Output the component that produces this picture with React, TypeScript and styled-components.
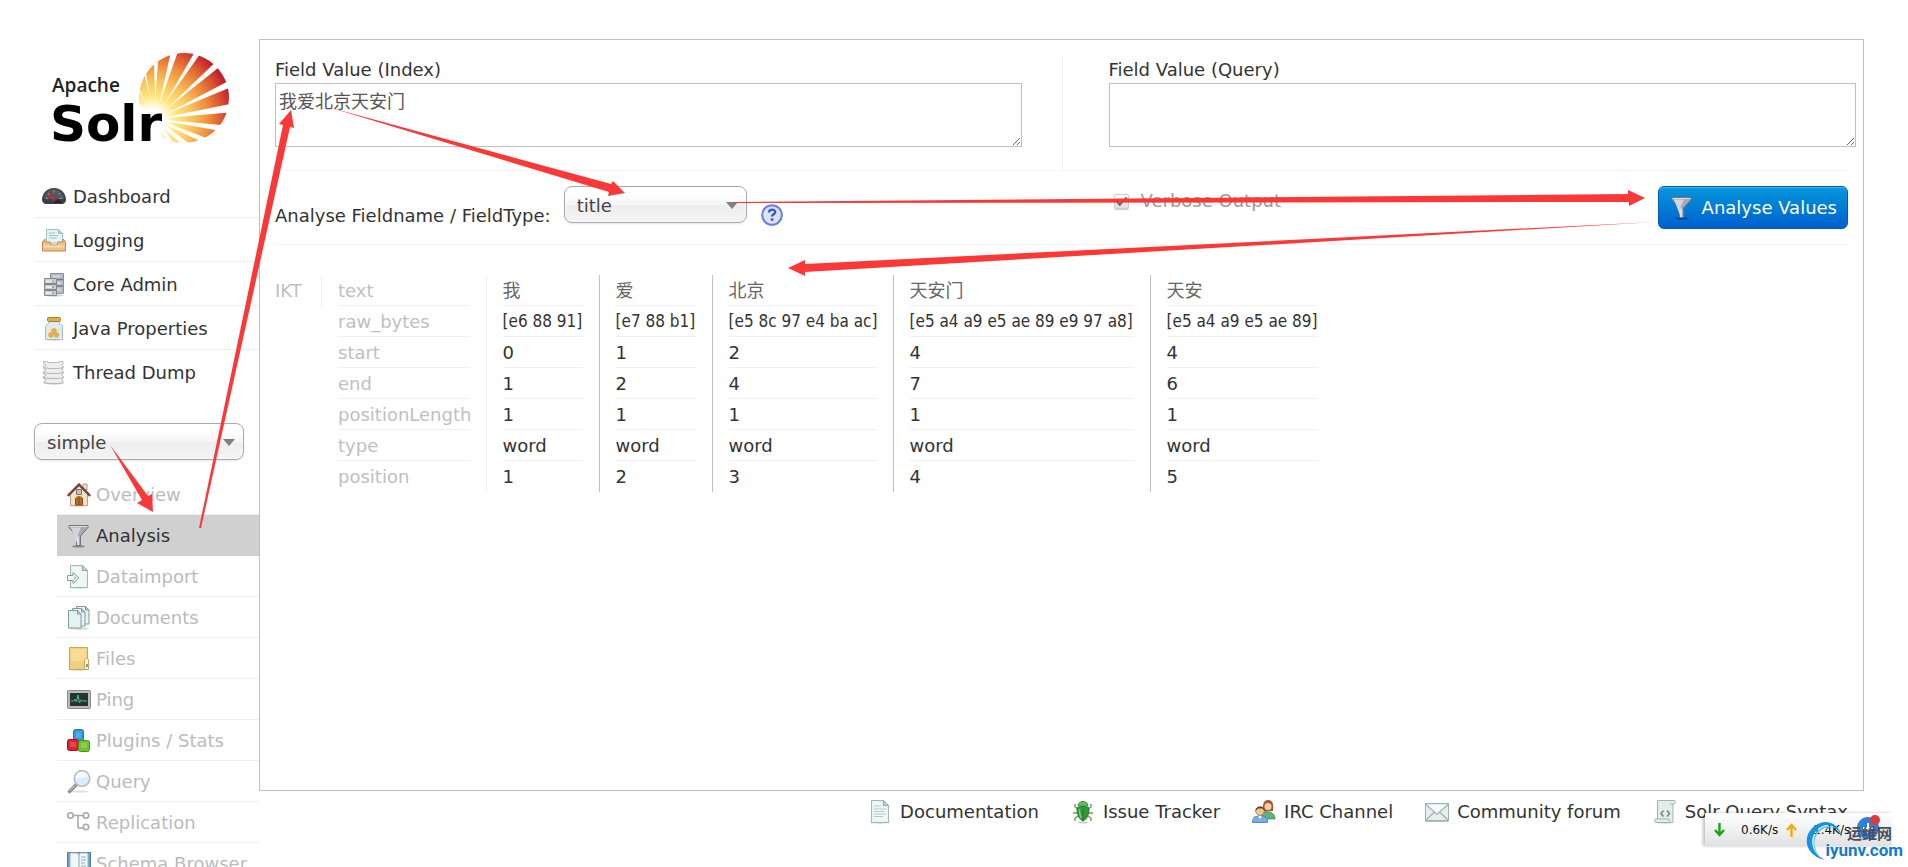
import React from "react";
import styled, { createGlobalStyle } from "styled-components";

const Global = createGlobalStyle`
  * { box-sizing: border-box; }
  body {
    margin: 0;
    background: #fff;
    color: #333;
    font: 18px/24px "DejaVu Sans", "Noto Sans CJK SC", sans-serif;
  }
  a { color: inherit; text-decoration: none; }
  ul { list-style: none; margin: 0; padding: 0; }
`;

const Page = styled.div`
  position: relative;
  display: flex;
  align-items: flex-start;
  height: 100vh;
  overflow: hidden;
  padding: 39px 44px 0 34px;
`;

/* ---------- sidebar ---------- */

const Sidebar = styled.aside`
  flex: 0 0 225px;
`;

const LogoLink = styled.a`
  display: block;
  height: 135px;
`;

const NavRow = styled.li<{ $last?: boolean }>`
  height: 44px;
  border-bottom: 1px solid ${(p) => (p.$last ? "transparent" : "#eee")};
`;

const NavLink = styled.a`
  display: flex;
  align-items: center;
  gap: 7px;
  height: 100%;
  padding: 2px 0 0 8px;
`;

const CoreArea = styled.div`
  padding-top: 29px;
`;

const CoreMenu = styled.ul`
  margin: 14px 0 0 23px;
`;

const CoreRow = styled.li<{ $active?: boolean }>`
  height: 41px;
  border-bottom: 1px solid ${(p) => (p.$active ? "#d0d0d0" : "#eee")};
  background: ${(p) => (p.$active ? "#d0d0d0" : "transparent")};
  color: ${(p) => (p.$active ? "#333" : "#bbb")};
`;

const CoreLink = styled.a`
  display: flex;
  align-items: center;
  gap: 5px;
  height: 100%;
  padding: 2px 0 0 10px;
  white-space: nowrap;
`;

/* ---------- select ---------- */

const SelectWrap = styled.span<{ $width: number }>`
  position: relative;
  display: block;
  width: ${(p) => p.$width}px;
`;

const SelectBox = styled.select`
  appearance: none;
  display: block;
  width: 100%;
  height: 37px;
  padding: 2px 32px 0 12px;
  border: 1px solid #aaa;
  border-radius: 8px;
  background: linear-gradient(#fff 20%, #f6f6f6 50%, #eee 52%, #f4f4f4 100%);
  box-shadow: 0 0 3px #fff inset, 0 1px 2px rgba(0, 0, 0, 0.1);
  color: #444;
  font: inherit;
`;

const SelectArrow = styled.svg`
  position: absolute;
  right: 9px;
  top: 16px;
  pointer-events: none;
`;

/* ---------- content ---------- */

const Main = styled.div`
  flex: 1;
  min-width: 0;
`;

const Content = styled.main`
  min-height: 752px;
  padding: 15px;
  border: 1px solid #c0c0c0;
`;

const FieldGrid = styled.div`
  display: grid;
  grid-template-columns: 1fr 1fr;
  height: 116px;
  border-bottom: 1px solid #f5f5f5;
`;

const FieldCell = styled.div<{ $right?: boolean }>`
  display: flex;
  flex-direction: column;
  gap: 2px;
  padding: ${(p) => (p.$right ? "3px 0 0 46px" : "3px 40px 0 0")};
  margin-right: ${(p) => (p.$right ? "-8px" : "0")};
  border-left: ${(p) => (p.$right ? "1px solid #f0f0f0" : "none")};
`;

const FieldLabel = styled.label`
  line-height: 23px;
`;

const FieldText = styled.textarea`
  height: 64px;
  padding: 6px 3px;
  border: 1px solid #c0c0c0;
  border-radius: 0;
  color: #555;
  font: inherit;
  resize: both;
`;

const Toolbar = styled.div`
  display: grid;
  grid-template-columns: 1fr 1fr;
  height: 74px;
  padding-top: 15px;
  border-bottom: 1px solid #f5f5f5;
`;

const ToolbarLeft = styled.div`
  display: flex;
  align-items: flex-start;
`;

const ToolbarRight = styled.div`
  display: flex;
  align-items: flex-start;
  justify-content: space-between;
  padding-left: 52px;
`;

const SelectLabel = styled.label`
  margin: 18px 13px 0 0;
`;

const HelpLink = styled.a`
  margin: 18px 0 0 14px;
  height: 22px;
`;

const Verbose = styled.label`
  display: flex;
  align-items: center;
  gap: 12px;
  margin-top: 3px;
  color: #999;
`;

const Check = styled.input`
  appearance: none;
  display: grid;
  place-items: center;
  width: 15px;
  height: 15px;
  margin: 0;
  border: 1px solid #ccc;
  border-radius: 2px;
  background: linear-gradient(#fafafa, #ddd);
  box-shadow: 0 1px 1px rgba(0, 0, 0, 0.2);
  &:checked::before {
    content: "";
    width: 9px;
    height: 4px;
    border: solid #666;
    border-width: 0 0 2px 2px;
    transform: translateY(-1px) rotate(-45deg);
  }
`;

const Analyse = styled.button`
  display: flex;
  align-items: center;
  gap: 8px;
  height: 43px;
  padding: 0 10px 0 11px;
  border: 1px solid #0059b2;
  border-radius: 6px;
  background: linear-gradient(#0597dd, #0060cd);
  box-shadow: inset 0 1px 1px rgba(255, 255, 255, 0.3);
  color: #fff;
  font: inherit;
`;

const Result = styled.section`
  display: flex;
  align-items: flex-start;
  padding-top: 30px;
`;

const Analyzer = styled.div`
  width: 47px;
  height: 31px;
  border-right: 1px solid #f0f0f0;
  color: #c0c0c0;
  line-height: 32px;
`;

const TokenTable = styled.table`
  border-collapse: collapse;
  table-layout: fixed;
  width: 1012px;
`;

const Col = styled.col<{ $width: number }>`
  width: ${(p) => p.$width}px;
`;

const LabelCell = styled.th`
  padding: 0 16px;
  color: #c0c0c0;
  font-weight: normal;
  text-align: left;
`;

const TokenCell = styled.td<{ $first?: boolean }>`
  padding: 0 16px;
  border-left: 1px solid ${(p) => (p.$first ? "#f0f0f0" : "#c0c0c0")};
`;

const CellText = styled.div<{ $raw?: boolean; $last?: boolean; $cjk?: boolean }>`
  height: 31px;
  border-bottom: 1px solid ${(p) => (p.$last ? "transparent" : "#f0f0f0")};
  line-height: 31px;
  white-space: nowrap;
  ${(p) => p.$cjk && "color: #666;"}
  ${(p) => p.$raw && `font-family: "DejaVu Sans Condensed", "DejaVu Sans", sans-serif; font-size: 17px;`}
`;

const Footer = styled.footer`
  padding: 9px 16px 0 0;
`;

const FooterList = styled.ul`
  display: flex;
  justify-content: flex-end;
  gap: 32px;
`;

const FooterLink = styled.a`
  display: flex;
  align-items: center;
  gap: 8px;
  white-space: nowrap;
`;

/* ---------- overlays ---------- */

const Arrows = styled.svg`
  position: absolute;
  left: 0;
  top: 0;
  pointer-events: none;
`;

const SpeedBar = styled.div`
  position: absolute;
  right: 16px;
  top: 813px;
  display: flex;
  align-items: center;
  width: 187px;
  height: 33px;
  padding-left: 9px;
  background: linear-gradient(#fff, #e2e2e2);
  box-shadow: -2px 0 3px rgba(0, 0, 0, 0.25);
  color: #111;
  font-size: 12px;
  line-height: 14px;
`;

const Speed = styled.span`
  width: 45px;
  margin-left: 16px;
`;

const Badge = styled.svg`
  position: absolute;
  right: 10px;
  top: 2px;
`;

const Watermark = styled.div`
  position: absolute;
  right: 5px;
  top: 820px;
  width: 98px;
  height: 41px;
`;

const Swirl = styled.svg`
  position: absolute;
  left: 0;
  top: 0;
`;

const MarkText = styled.div`
  position: relative;
  padding: 4px 11px 0 0;
  color: #4b4f5c;
  font: bold 15px/18px "Noto Sans CJK SC", sans-serif;
  text-align: right;
`;

const MarkSite = styled.div`
  position: relative;
  color: #0f7bd0;
  font: bold 17px/17px Roboto, "Liberation Sans", sans-serif;
  text-align: right;
`;

/* ---------- icons ---------- */

type IconProps = { children: React.ReactNode };
const Icon = ({ children }: IconProps) => (
  <svg width="24" height="24" viewBox="0 0 24 24" aria-hidden="true">
    {children}
  </svg>
);

const shadow = <ellipse cx="12" cy="22.5" rx="10" ry="1.2" fill="#000" opacity=".18" />;

const page = (
  <>
    {shadow}
    <path d="M3.5.5h12l5 5v17h-17z" fill="#e8f2f1" stroke="#a3b9b7" />
    <path d="M5 2h9v4l5 1v14H5z" fill="#f4f9f8" opacity=".7" />
    <path d="M15.500.5v5h5z" fill="#c3d4d2" stroke="#8fa9a6" />
  </>
);

const icons: Record<string, React.ReactNode> = {
  dashboard: (
    <Icon>
      <path d="M0 15C0 8 5 3 12 3s12 5 12 12c0 2-2 4-4 4H4c-2 0-4-2-4-4z" fill="#3d3f46" />
      <path d="M2 14C2 8 7 4 12 4s10 4 10 10z" fill="#54565e" />
      <path d="M4 13l2 .5M6 8l1.500 1.500M12 5.500v2M18 8l-1.500 1.500M20 13l-2 .5" stroke="#a8a8ac" />
      <path d="M5.500 9l10 9" stroke="#e8232b" strokeWidth="1.600" />
      <path d="M12 18a4 3 0 018 0z" fill="#26272c" />
    </Icon>
  ),
  logging: (
    <Icon>
      <path d="M4.500 14V.5h12l4 4V14z" fill="#e6f3f4" stroke="#a0c0c2" />
      <path d="M16.500.5v4h4z" fill="#bdd6d8" stroke="#a0c0c2" />
      <path d="M7 4h6M7 6.500h9M7 9h8" stroke="#9cc5c4" />
      <path d="M.5 12.500L3 10v3h5l1 3h6l1-3h5v-3l2.500 2.500V22H.5z" fill="#efbd85" stroke="#c48a4e" />
      <path d="M1.500 17.500h21" stroke="#fbdcb5" strokeWidth="2" />
    </Icon>
  ),
  core: (
    <Icon>
      {shadow}
      <path d="M8.500.5h13v20h-13z" fill="#b9bdc2" stroke="#8d9095" />
      <path d="M9 6.500h12M9 13h12" stroke="#777a80" strokeWidth="1.500" />
      <path d="M11 3.500h7M15 10h4M15 16.500h4" stroke="#d7d3f0" strokeWidth="2" />
      <path d="M2.500 5.500h12v17h-12z" fill="#c9cdce" stroke="#85898c" />
      <path d="M3 11h11M3 17h11" stroke="#6f7376" strokeWidth="1.500" />
      <path d="M4 8.500h9M4 14h9M4 20h9" stroke="#e8efe9" strokeWidth="2" />
      <path d="M10 8.500h2.500M10 14h2.500M10 20h2.500" stroke="#8fb39b" strokeWidth="2" />
    </Icon>
  ),
  java: (
    <Icon>
      {shadow}
      <path d="M7 4h10v2l3.500 3v12c0 1-1 1.500-2 1.500h-13c-1 0-2-.5-2-1.500V9L7 6z" fill="#dcecf6" stroke="#9bbdd1" />
      <rect x="5.500" y=".5" width="13" height="4" rx="1" fill="#d9b04c" stroke="#aa7e22" />
      <path d="M6 11h12v9H6z" fill="#f3e6bd" />
      <g fill="#dfb154" stroke="#c99a45" strokeWidth=".5">
        <circle cx="12" cy="14" r="2.400" />
        <circle cx="9" cy="18" r="2.400" />
        <circle cx="14.500" cy="18" r="2.400" />
      </g>
    </Icon>
  ),
  thread: (
    <Icon>
      {shadow}
      {[16.500, 11.500, 6.500, 1.500].map((y) => (
        <path
          key={y}
          d={`M1.500 ${y - 1}h3l2 1h9l3-1h2l1 1.500-2 2 2 1.500-1 1.500h-2l-2 .5H7l-2-.5H2l-.5-1 2.500-2L1.500 ${y + 1}z`}
          fill="#ededed"
          stroke="#b0b0b0"
          strokeWidth=".9"
        />
      ))}
    </Icon>
  ),
  home: (
    <Icon>
      {shadow}
      <path d="M16 1h4v6h-4z" fill="#e7dfd3" stroke="#9a8c7c" strokeWidth=".8" />
      <path d="M3.500 11L12 3l8.500 8v11.500h-17z" fill="#f1e2c8" stroke="#b7a285" />
      <path d="M.8 13L12 1.500 23.200 13" fill="none" stroke="#73473a" strokeWidth="2.400" />
      <path d="M9.500 6.500h5v5h-5z" fill="#b9c3d2" stroke="#7f7364" />
      <path d="M8.500 22v-6c0-3 7-3 7 0v6z" fill="#b96a28" stroke="#8a4a18" />
      <path d="M12 15v7" stroke="#8a4a18" />
    </Icon>
  ),
  funnel: (
    <Icon>
      <ellipse cx="11.500" cy="22.300" rx="6.500" ry="1.200" fill="#000" opacity=".35" />
      <path d="M2 1.500h19v2l-7.500 8.500v9.500h-4V12L2 3.500z" fill="#a9a9b2" stroke="#74747c" />
      <path d="M4 3.500h10l-3.500 8v9" fill="#d4d4dc" />
      <path d="M11 12.500v8.500" stroke="#e8e8ee" strokeWidth="1.600" />
      <path d="M2.500 2.500h18" stroke="#dedee4" />
    </Icon>
  ),
  dataimport: (
    <Icon>
      {page}
      <path d="M.5 10.500H6v-3l6 5.500-6 5.500v-3H.5z" fill="#f2f7f6" stroke="#869e9b" />
      <circle cx="8" cy="13" r="1.500" fill="#b5c9c7" />
    </Icon>
  ),
  documents: (
    <Icon>
      {shadow}
      {[
        [9, 0],
        [5, 2],
        [1, 4],
      ].map(([x, y]) => (
        <g key={x} transform={`translate(${x} ${y})`}>
          <path d="M.5.5h9l3.500 3.500v14H.5z" fill="#e6f2f2" stroke="#7f9f9d" />
          <path d="M9.500.5V4H13z" fill="#bcd0cf" stroke="#7f9f9d" />
        </g>
      ))}
    </Icon>
  ),
  files: (
    <Icon>
      {shadow}
      <path d="M2.500.5h18v22h-18z" fill="#f0cf7f" stroke="#cda54c" />
      <path d="M4 2h15v12H4z" fill="#f7dc98" />
      <path d="M17.500 22.500V13c1-2 4-2 4 0v9.500z" fill="#f7f2dd" stroke="#cda54c" />
      <path d="M20 17v3" stroke="#39b7d6" strokeWidth="2" />
    </Icon>
  ),
  ping: (
    <Icon>
      <rect x=".5" y="2.500" width="23" height="18" rx="1" fill="#b9bab9" stroke="#898a89" />
      <rect x="3" y="5" width="18" height="13" fill="#27332f" />
      <path d="M4 13h3l1-2 1.500 3 1.500-7 1.500 8 1.500-3 2 1h4" fill="none" stroke="#3fc096" />
    </Icon>
  ),
  plugins: (
    <Icon>
      <rect x="6.500" y=".5" width="10" height="12" rx="2" fill="#2f9bd8" stroke="#1b78b3" />
      <rect x=".5" y="10.500" width="11" height="11" rx="2" fill="#e01f33" stroke="#a90f20" />
      <rect x="11.500" y="11.500" width="11" height="11" rx="2" fill="#74c132" stroke="#4a8f17" />
      <path d="M9 3h5v6H9zM3 13h6v5H3zM14 14h6v5h-6z" fill="#fff" opacity=".18" />
    </Icon>
  ),
  query: (
    <Icon>
      <ellipse cx="13" cy="21.500" rx="9" ry="1.200" fill="#000" opacity=".12" />
      <path d="M2.500 21.500l7-7" stroke="#8b8f94" strokeWidth="3.500" strokeLinecap="round" />
      <path d="M3 20.500l5-5" stroke="#d7d9db" />
      <circle cx="15" cy="8.500" r="7.800" fill="#dcebfa" stroke="#b6bcc4" strokeWidth="1.600" />
      <path d="M9 8a6 6 0 0112-1c-4-1-7 2-12 1z" fill="#fff" opacity=".75" />
    </Icon>
  ),
  replication: (
    <Icon>
      <path d="M6 4.500h10M11 4.500v11c0 1 1 1.500 2 1.500h4" fill="none" stroke="#a8a8a8" strokeWidth="1.600" />
      <g fill="#fff" stroke="#a8a8a8" strokeWidth="1.600">
        <circle cx="3.500" cy="4.500" r="2.700" />
        <circle cx="19" cy="4.500" r="2.700" />
        <circle cx="19" cy="16" r="2.700" />
      </g>
    </Icon>
  ),
  book: (
    <Icon>
      <path d="M.5.5h23v23H.5z" fill="#6d9cc9" stroke="#4c7fb3" />
      <path d="M3 1h8l1 2 1-2h8v22H3z" fill="#f0f8f7" stroke="#9fb9b8" />
      <path d="M12 2v21" stroke="#90aba9" />
      <path d="M14 5h5M14 8h5M14 11h4M14 14h5" stroke="#8fb6b4" />
    </Icon>
  ),
  doc: (
    <Icon>
      {page}
      <path d="M6 6h7M6 9h12M6 11.500h10M6 14h12M6 16.500h9" stroke="#b5c8c6" />
    </Icon>
  ),
  bug: (
    <Icon>
      <ellipse cx="12" cy="22.500" rx="5" ry="1" fill="#000" opacity=".2" />
      <path
        d="M7 9L4 7V4M17 9l3-2V4M6 13H2M18 13h4M7 16l-3 2v3M17 16l3 2v3"
        fill="none"
        stroke="#6f9a62"
        strokeWidth="1.400"
      />
      <path d="M7 6c0-6 10-6 10 0z" fill="#65c15e" stroke="#3d8f3f" />
      <path d="M6 8c3-2 9-2 12 0 0 7-2 11-6 13-4-2-6-6-6-13z" fill="#2f9a3b" stroke="#237a2e" />
      <path d="M12 9v11" stroke="#237a2e" />
      <path d="M8.500 9c0 4 .5 7 2 9" fill="none" stroke="#7ad277" strokeWidth="1.500" />
    </Icon>
  ),
  irc: (
    <Icon>
      <path d="M11 12c-1-8 1-12 5-12s6 3 5 11z" fill="#a85b2d" />
      <circle cx="16" cy="6.500" r="3.500" fill="#f6d0a8" />
      <path d="M9 19c0-6 3-7 7-7s7 2 7 7z" fill="#59b577" stroke="#38895a" strokeWidth=".7" />
      <circle cx="8" cy="11" r="4.300" fill="#f5c28f" stroke="#a86a35" strokeWidth=".7" />
      <path d="M3.500 11c-.5-5 9.500-6 9 0l-2-2.500H6z" fill="#5b4126" />
      <path d="M.5 22.500c0-5 2-6.500 7.500-6.500s7.500 1.500 7.500 6.500z" fill="#76b0ec" stroke="#3d74b8" strokeWidth=".8" />
      <path d="M6 16l2 3 2-3z" fill="#fff" />
    </Icon>
  ),
  mail: (
    <Icon>
      <rect x=".5" y="3.500" width="23" height="17" fill="#e7efee" stroke="#9db1af" />
      <path d="M2 5h20L12 13.500z" fill="#f8fbfb" />
      <path d="M1 20l8.500-8M23 20l-8.500-8M1 4.500l11 10 11-10" fill="none" stroke="#9fb2b0" strokeWidth="1.200" />
      <path d="M.5 21.500h23" stroke="#b9c3c2" />
    </Icon>
  ),
  syntax: (
    <Icon>
      {shadow}
      <path
        d="M5 .5h16c2 0 2 4-1 3.500V20c0 1.500-1 2.500-2.500 2.500H3c-2 0-2-3.500 0-3.500h1.500V3c0-1.500 0-2.500.5-2.500z"
        fill="#e3edec"
        stroke="#9eb4b1"
      />
      <path d="M4.500 19H15c2 0 1 3.500 2.500 3.500M17 4h3" fill="none" stroke="#9eb4b1" />
      <path d="M10.500 10.500L8 13.500l2.500 3M14 10.500l2.500 3-2.500 3" fill="none" stroke="#7b8f8c" strokeWidth="1.700" />
    </Icon>
  ),
};

/* Every sun ray, as the two points where its edges pass the rim of the disc. */
const rays = [
  [84, 44, 89, 27],
  [92, 24, 103, 8],
  [107, 6, 119, -3],
  [126, -6, 142, -10],
  [152, -10, 170, -3],
  [176, 1, 190, 15],
  [194, 21, 204, 37],
  [207, 44, 211, 62],
  [211, 72, 207, 88],
  [204, 95, 196, 108],
  [191, 114, 179, 122],
  [170, 126, 158, 129],
  [149, 129, 138, 124],
];

const Logo = () => (
  <svg width="224" height="118" viewBox="0 0 224 118" role="img" aria-label="Apache Solr">
    <defs>
      <radialGradient id="sun" gradientUnits="userSpaceOnUse" cx="118" cy="82" r="82">
        <stop offset="0.140" stopColor="#fff" />
        <stop offset="0.300" stopColor="#ffe680" />
        <stop offset="0.480" stopColor="#fbc55c" />
        <stop offset="0.700" stopColor="#ee8a3c" />
        <stop offset="0.860" stopColor="#dc5330" />
        <stop offset="1" stopColor="#c0202c" />
      </radialGradient>
      <clipPath id="disc">
        <circle cx="150" cy="59" r="45" />
      </clipPath>
    </defs>
    <g clipPath="url(#disc)" fill="url(#sun)">
      {rays.map(([a, b, c, d]) => (
        <path key={a + "-" + b} d={`M120 80L${a} ${b}L${c} ${d}L122 80z`} />
      ))}
    </g>
    <text x="18" y="53" fontFamily="'Open Sans', sans-serif" fontWeight="600" fontSize="19" fill="#222">
      Apache
    </text>
    <text x="16" y="102" fontFamily="'DejaVu Sans', sans-serif" fontWeight="700" fontSize="50" fill="#000">
      Solr
    </text>
  </svg>
);

/* ---------- data ---------- */

const mainNav = [
  ["dashboard", "Dashboard"],
  ["logging", "Logging"],
  ["core", "Core Admin"],
  ["java", "Java Properties"],
  ["thread", "Thread Dump"],
];

const coreNav = [
  ["home", "Overview"],
  ["funnel", "Analysis"],
  ["dataimport", "Dataimport"],
  ["documents", "Documents"],
  ["files", "Files"],
  ["ping", "Ping"],
  ["plugins", "Plugins / Stats"],
  ["query", "Query"],
  ["replication", "Replication"],
  ["book", "Schema Browser"],
];

const footerNav = [
  ["doc", "Documentation"],
  ["bug", "Issue Tracker"],
  ["irc", "IRC Channel"],
  ["mail", "Community forum"],
  ["syntax", "Solr Query Syntax"],
];

const tokenRows = [
  ["text", "我", "爱", "北京", "天安门", "天安"],
  ["raw_bytes", "[e6 88 91]", "[e7 88 b1]", "[e5 8c 97 e4 ba ac]", "[e5 a4 a9 e5 ae 89 e9 97 a8]", "[e5 a4 a9 e5 ae 89]"],
  ["start", "0", "1", "2", "4", "4"],
  ["end", "1", "2", "4", "7", "6"],
  ["positionLength", "1", "1", "1", "1", "1"],
  ["type", "word", "word", "word", "word", "word"],
  ["position", "1", "2", "3", "4", "5"],
];

const columnWidths = [164, 113, 113, 181, 257, 184];

const Dropdown = ({ id, value, width, label }: { id: string; value: string; width: number; label?: string }) => (
  <SelectWrap $width={width}>
    <SelectBox id={id} aria-label={label} defaultValue={value}>
      <option value={value}>{value}</option>
    </SelectBox>
    <SelectArrow width="12" height="8" viewBox="0 0 12 8">
      <path d="M0 0h12L6 7z" fill="#808080" />
    </SelectArrow>
  </SelectWrap>
);

export default function App() {
  return (
    <>
      <Global />
      <Page>
        <Sidebar>
          <LogoLink href="#">
            <Logo />
          </LogoLink>
          <nav>
            <ul>
              {mainNav.map(([icon, text], i) => (
                <NavRow key={text} $last={i === mainNav.length - 1}>
                  <NavLink href="#">
                    {icons[icon]}
                    {text}
                  </NavLink>
                </NavRow>
              ))}
            </ul>
          </nav>
          <CoreArea>
            <Dropdown id="core" value="simple" width={210} label="Core" />
            <CoreMenu>
              {coreNav.map(([icon, text]) => (
                <CoreRow key={text} $active={text === "Analysis"}>
                  <CoreLink href="#">
                    {icons[icon]}
                    {text}
                  </CoreLink>
                </CoreRow>
              ))}
            </CoreMenu>
          </CoreArea>
        </Sidebar>

        <Main>
          <Content>
            <form>
              <FieldGrid>
                <FieldCell>
                  <FieldLabel htmlFor="index">Field Value (Index)</FieldLabel>
                  <FieldText id="index" defaultValue="我爱北京天安门" spellCheck={false} />
                </FieldCell>
                <FieldCell $right>
                  <FieldLabel htmlFor="query">Field Value (Query)</FieldLabel>
                  <FieldText id="query" />
                </FieldCell>
              </FieldGrid>
              <Toolbar>
                <ToolbarLeft>
                  <SelectLabel htmlFor="field">Analyse Fieldname / FieldType:</SelectLabel>
                  <Dropdown id="field" value="title" width={183} />
                  <HelpLink href="#" aria-label="Help">
                    <svg width="22" height="22" viewBox="0 0 22 22">
                      <circle cx="11" cy="11" r="9.800" fill="#dfe2ea" stroke="#6480e6" strokeWidth="2" />
                      <path d="M8 8.500c0-4 6.500-3.500 6.200-.3-.2 2-3.200 2-3.200 4.300" fill="none" stroke="#3457d0" strokeWidth="2.400" />
                      <path d="M9.800 14.300h2.600v2.500H9.800z" fill="#3457d0" />
                    </svg>
                  </HelpLink>
                </ToolbarLeft>
                <ToolbarRight>
                  <Verbose>
                    <Check type="checkbox" defaultChecked />
                    Verbose Output
                  </Verbose>
                  <Analyse type="button">
                    {icons.funnel}
                    Analyse Values
                  </Analyse>
                </ToolbarRight>
              </Toolbar>
            </form>

            <Result>
              <Analyzer>IKT</Analyzer>
              <TokenTable>
                <colgroup>
                  {columnWidths.map((w, i) => (
                    <Col key={i} $width={w} />
                  ))}
                </colgroup>
                <tbody>
                  {tokenRows.map(([label, ...values], r) => (
                    <tr key={label}>
                      <LabelCell scope="row">
                        <CellText $last={r === 6}>{label}</CellText>
                      </LabelCell>
                      {values.map((value, c) => (
                        <TokenCell key={c} $first={c === 0}>
                          <CellText $last={r === 6} $raw={r === 1} $cjk={r === 0}>
                            {value}
                          </CellText>
                        </TokenCell>
                      ))}
                    </tr>
                  ))}
                </tbody>
              </TokenTable>
            </Result>
          </Content>

          <Footer>
            <FooterList>
              {footerNav.map(([icon, text]) => (
                <li key={text}>
                  <FooterLink href="#">
                    {icons[icon]}
                    {text}
                  </FooterLink>
                </li>
              ))}
            </FooterList>
          </Footer>
        </Main>

        <SpeedBar>
          <svg width="11" height="14" viewBox="0 0 11 14">
            <path d="M5.500 0v11M1 7l4.500 5L10 7" fill="none" stroke="#12a812" strokeWidth="2.400" />
          </svg>
          <Speed>0.6K/s</Speed>
          <svg width="11" height="14" viewBox="0 0 11 14">
            <path d="M5.500 14V3M1 7l4.500-5L10 7" fill="none" stroke="#f9a70c" strokeWidth="2.400" />
          </svg>
          <Speed>1.4K/s</Speed>
          <Badge width="26" height="26" viewBox="0 0 26 26">
            <circle cx="12" cy="13" r="11" fill="#2f7fdc" />
            <path d="M12 8v10M7 13h10" stroke="#fff" strokeWidth="2" />
            <circle cx="19" cy="5" r="5" fill="#e03a3a" />
          </Badge>
        </SpeedBar>

        <Watermark>
          <Swirl width="40" height="41" viewBox="0 0 40 41">
            <path d="M37 17C34 4 22-2 11 5-3 14-2 35 20 40 6 33 3 18 13 9c9-8 19-3 24 8z" fill="#1593df" />
            <path d="M32 9C24 3 14 6 10 15c-3 8-1 16 4 21C8 27 8 18 14 12c5-5 11-6 18-3z" fill="#5fc4f3" />
          </Swirl>
          <MarkText>运维网</MarkText>
          <MarkSite>iyunv.com</MarkSite>
        </Watermark>

        <Arrows width="1908" height="600" viewBox="0 0 1908 600" fill="#fb3838" aria-hidden="true">
          <path d="M110 445L148 496L152 494L153 512L137 503L142 500z" />
          <path d="M199 528L283 125L279 124L291 110L294 128L290 127L201 528z" />
          <path d="M328 107L611 184L613 181L625 193L608 196L609 192z" />
          <path d="M733 202L1628 194V190L1645 198L1629 206V202L733 203z" />
          <path d="M1655 222L805 264V260L788 268L805 276V272z" />
        </Arrows>
      </Page>
    </>
  );
}
